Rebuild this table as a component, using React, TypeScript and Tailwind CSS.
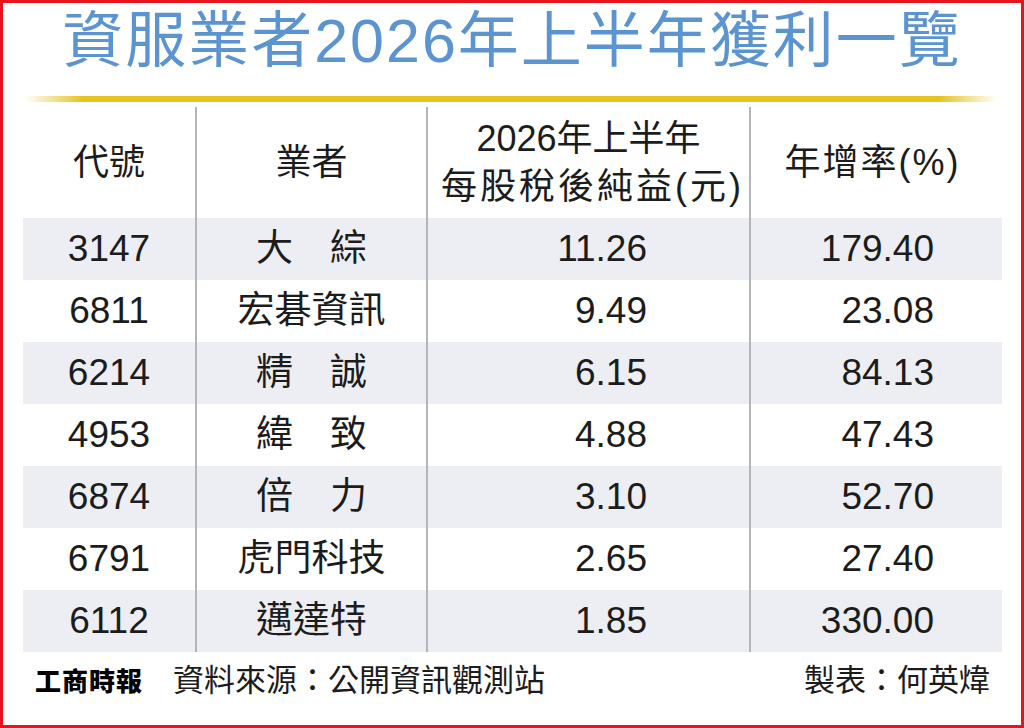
import React from "react";

const rows = [
  { code: "3147", name: "大　綜", eps: "11.26", yoy: "179.40" },
  { code: "6811", name: "宏碁資訊", eps: "9.49", yoy: "23.08" },
  { code: "6214", name: "精　誠", eps: "6.15", yoy: "84.13" },
  { code: "4953", name: "緯　致", eps: "4.88", yoy: "47.43" },
  { code: "6874", name: "倍　力", eps: "3.10", yoy: "52.70" },
  { code: "6791", name: "虎門科技", eps: "2.65", yoy: "27.40" },
  { code: "6112", name: "邁達特", eps: "1.85", yoy: "330.00" },
];

const font = { fontFamily: '"Liberation Sans", "Noto Sans CJK TC", sans-serif' };

export default function App() {
  return (
    <div
      className="w-[1024px] h-[728px] border-[3px] border-[#e8141b] bg-white flex flex-col text-[#1c1c1c]"
      style={font}
    >
      <div className="h-[90px] flex items-center justify-center">
        <h1 className="text-[61px] leading-none tracking-[2px] text-[#5b94d1] font-normal mb-[14px]">
          資服業者2026年上半年獲利一覽
        </h1>
      </div>
      <div className="mt-[3px] ml-[22px] w-[972px] h-[6px] bg-[linear-gradient(to_right,rgba(232,196,30,0),#e6c320_6%,#e6c320_94%,rgba(232,196,30,0))]" />
      <div className="mt-[5px] ml-[20px] w-[979px] flex flex-col">
        <div className="grid grid-cols-[172px_231px_323px_253px] h-[111px] text-[36px]">
          <div className="flex items-center justify-center pt-[1px]">代號</div>
          <div className="flex items-center justify-center border-l-2 border-[#b3b5bb]">業者</div>
          <div className="flex flex-col items-center justify-center border-l-2 border-[#b3b5bb] leading-[48px]">
            <span>2026年上半年</span>
            <span className="tracking-[3px] pl-[8px]">每股稅後純益(元)</span>
          </div>
          <div className="flex items-center justify-center border-l-2 border-[#b3b5bb] pr-[8px] tracking-[2px]">
            年增率(%)
          </div>
        </div>
        {rows.map((r, i) => (
          <div
            key={r.code}
            className={`grid grid-cols-[172px_231px_323px_253px] h-[62px] text-[37px] ${
              i % 2 === 0 ? "bg-[#eceef3]" : "bg-white"
            }`}
          >
            <div className="flex items-center justify-center">{r.code}</div>
            <div className="flex items-center justify-center border-l-2 border-[#b3b5bb]">{r.name}</div>
            <div className="flex items-center justify-end pr-[102px] border-l-2 border-[#b3b5bb]">{r.eps}</div>
            <div className="flex items-center justify-end pr-[68px] border-l-2 border-[#b3b5bb]">{r.yoy}</div>
          </div>
        ))}
      </div>
      <div className="ml-[20px] w-[979px] h-[56px] flex items-center">
        <span
          className="ml-[12px] text-[26px] font-black tracking-[1px] text-black leading-none"
          style={{ fontFamily: '"Noto Sans CJK TC", sans-serif' }}
        >
          工商時報
        </span>
        <span className="ml-[30px] text-[31px] leading-none">資料來源：公開資訊觀測站</span>
        <span className="ml-auto mr-[12px] text-[31px] leading-none">製表：何英煒</span>
      </div>
    </div>
  );
}
